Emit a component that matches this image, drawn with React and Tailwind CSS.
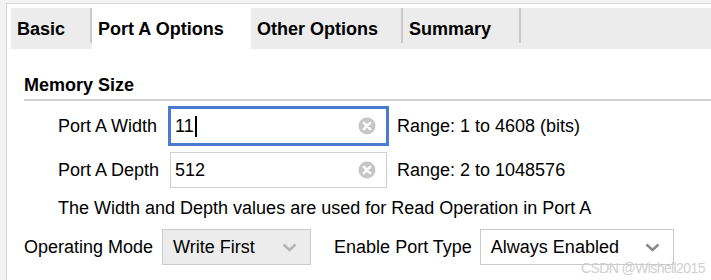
import React from 'react';

const font = { fontFamily: '"Liberation Sans", Arial, sans-serif' };

const ClearIcon = () => (
  <svg width="18" height="18" viewBox="0 0 18 18" className="shrink-0">
    <circle cx="9" cy="9" r="8.5" fill="#c6c6c6" />
    <path d="M5.8 5.8 L12.2 12.2 M12.2 5.8 L5.8 12.2" stroke="#fff" strokeWidth="2.4" strokeLinecap="round" />
  </svg>
);

const Chevron = ({ color }) => (
  <svg width="15" height="9" viewBox="0 0 15 9" className="shrink-0">
    <path d="M1.5 1.5 L7.5 7 L13.5 1.5" fill="none" stroke={color} strokeWidth="2.6" />
  </svg>
);

const Tab = ({ label, active, width }) => (
  <div
    className={`h-full flex items-start pt-[11px] px-[6px] font-bold text-[18px] leading-[21px] text-black ${
      active ? 'bg-white' : ''
    }`}
    style={{ width }}
  >
    {label}
  </div>
);

const Sep = () => <div className="w-[2px] h-[35px] bg-[#c9c9c9] shrink-0" />;

const TextField = ({ value, focused, hint }) => (
  <div className="flex items-center h-[36px]">
    <div className="w-[112px] shrink-0">{hint.label}</div>
    <div
      className={`w-[217px] h-[36px] flex items-center justify-between pl-[4px] pr-[10px] bg-white border ${
        focused ? 'border-[#4a7bd0] outline-2 outline-solid outline-[#4a7bd0]' : 'border-[#cfcfcf]'
      }`}
    >
      <span className="flex items-center">
        {value}
        {focused && <span className="ml-[1px] w-[2px] h-[21px] bg-black inline-block" />}
      </span>
      <ClearIcon />
    </div>
    <div className="ml-[10px]">{hint.range}</div>
  </div>
);

export default function App() {
  return (
    <div className="w-[711px] h-[280px] bg-[#f3f3f3] pt-[3px] pl-[6px] overflow-hidden relative" style={font}>
      <div className="h-full bg-white border-l border-t border-[#d6d6d6] pl-[4px] pt-[4px]">
        {/* tab strip */}
        <div className="h-[41px] bg-[#ececec] flex items-start">
          <Tab label="Basic" width={79} />
          <Sep />
          <Tab label="Port A Options" active width={159} />
          <Tab label="Other Options" width={150} />
          <Sep />
          <Tab label="Summary" width={116} />
          <Sep />
        </div>

        {/* content */}
        <div className="pl-[13px] text-[18px] leading-[21px] text-black">
          <div className="mt-[26px] font-bold">Memory Size</div>
          <div className="mt-[3px] h-[2px] bg-[#d0d0d0]" />

          <div className="pl-[34px] mt-[7px] flex flex-col gap-[8px]">
            <TextField value="11" focused hint={{ label: 'Port A Width', range: 'Range: 1 to 4608 (bits)' }} />
            <TextField value="512" hint={{ label: 'Port A Depth', range: 'Range: 2 to 1048576' }} />
          </div>

          <div className="pl-[34px] mt-[10px]">The Width and Depth values are used for Read Operation in Port A</div>

          <div className="mt-[10px] flex items-center h-[36px]">
            <span>Operating Mode</span>
            <div className="ml-[9px] w-[149px] h-[36px] bg-[#ececec] border border-[#cbcbcb] flex items-center justify-between pl-[10px] pr-[13px]">
              <span>Write First</span>
              <Chevron color="#b4b4b4" />
            </div>
            <span className="ml-[23px]">Enable Port Type</span>
            <div className="ml-[8px] w-[194px] h-[36px] bg-white border border-[#cbcbcb] flex items-center justify-between pl-[10px] pr-[13px]">
              <span>Always Enabled</span>
              <Chevron color="#8a8a8a" />
            </div>
          </div>
        </div>
      </div>

      <div className="absolute left-[581px] top-[260px] text-[14px] leading-[16px] tracking-[-0.6px] text-[#cfcfcf]">
        CSDN @Wishell2015
      </div>
    </div>
  );
}
